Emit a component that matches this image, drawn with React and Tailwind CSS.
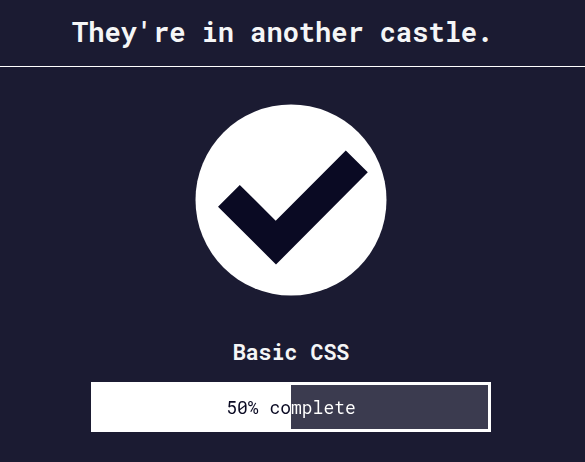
function Header() {
  return (
    <header className="flex h-[67px] items-center border-b border-white pb-[2px] pl-[72px]">
      <h1 className="text-[27px] leading-[40px] font-bold whitespace-nowrap">
        They&apos;re in another castle.
      </h1>
    </header>
  );
}

function PassedIcon() {
  return (
    <svg className="mt-[37px] size-[192px]" viewBox="195 104 192 192">
      <circle cx="291" cy="200" r="95.5" fill="#ffffff" />
      <path
        d="M239.8 184.9 275.7 220.7 345.8 150.6 367.8 172.3 276 264.5 218 206.7Z"
        fill="#0a0a23"
      />
    </svg>
  );
}

// The label's colour switches where the fill ends.
function ProgressBar() {
  return (
    <div className="mt-[13px] h-[50px] w-[400px] border-[3px] border-white bg-linear-to-r from-white from-50% to-[#3b3b4f] to-50%">
      <div className="bg-linear-to-r from-[#0a0a23] from-50% to-white to-50% bg-clip-text text-center text-[18px] leading-[44px] text-transparent">
        50% complete
      </div>
    </div>
  );
}

export default function App() {
  return (
    <div className="h-[462px] w-[585px] overflow-hidden bg-[#1b1b32] font-['Roboto_Mono','Liberation_Mono',monospace] text-[#f5f6f7] antialiased">
      <Header />
      <main className="flex w-[582px] flex-col items-center">
        <PassedIcon />
        <h2 className="mt-[39px] text-[21.6px] leading-[34px] font-bold">
          Basic CSS
        </h2>
        <ProgressBar />
      </main>
    </div>
  );
}
